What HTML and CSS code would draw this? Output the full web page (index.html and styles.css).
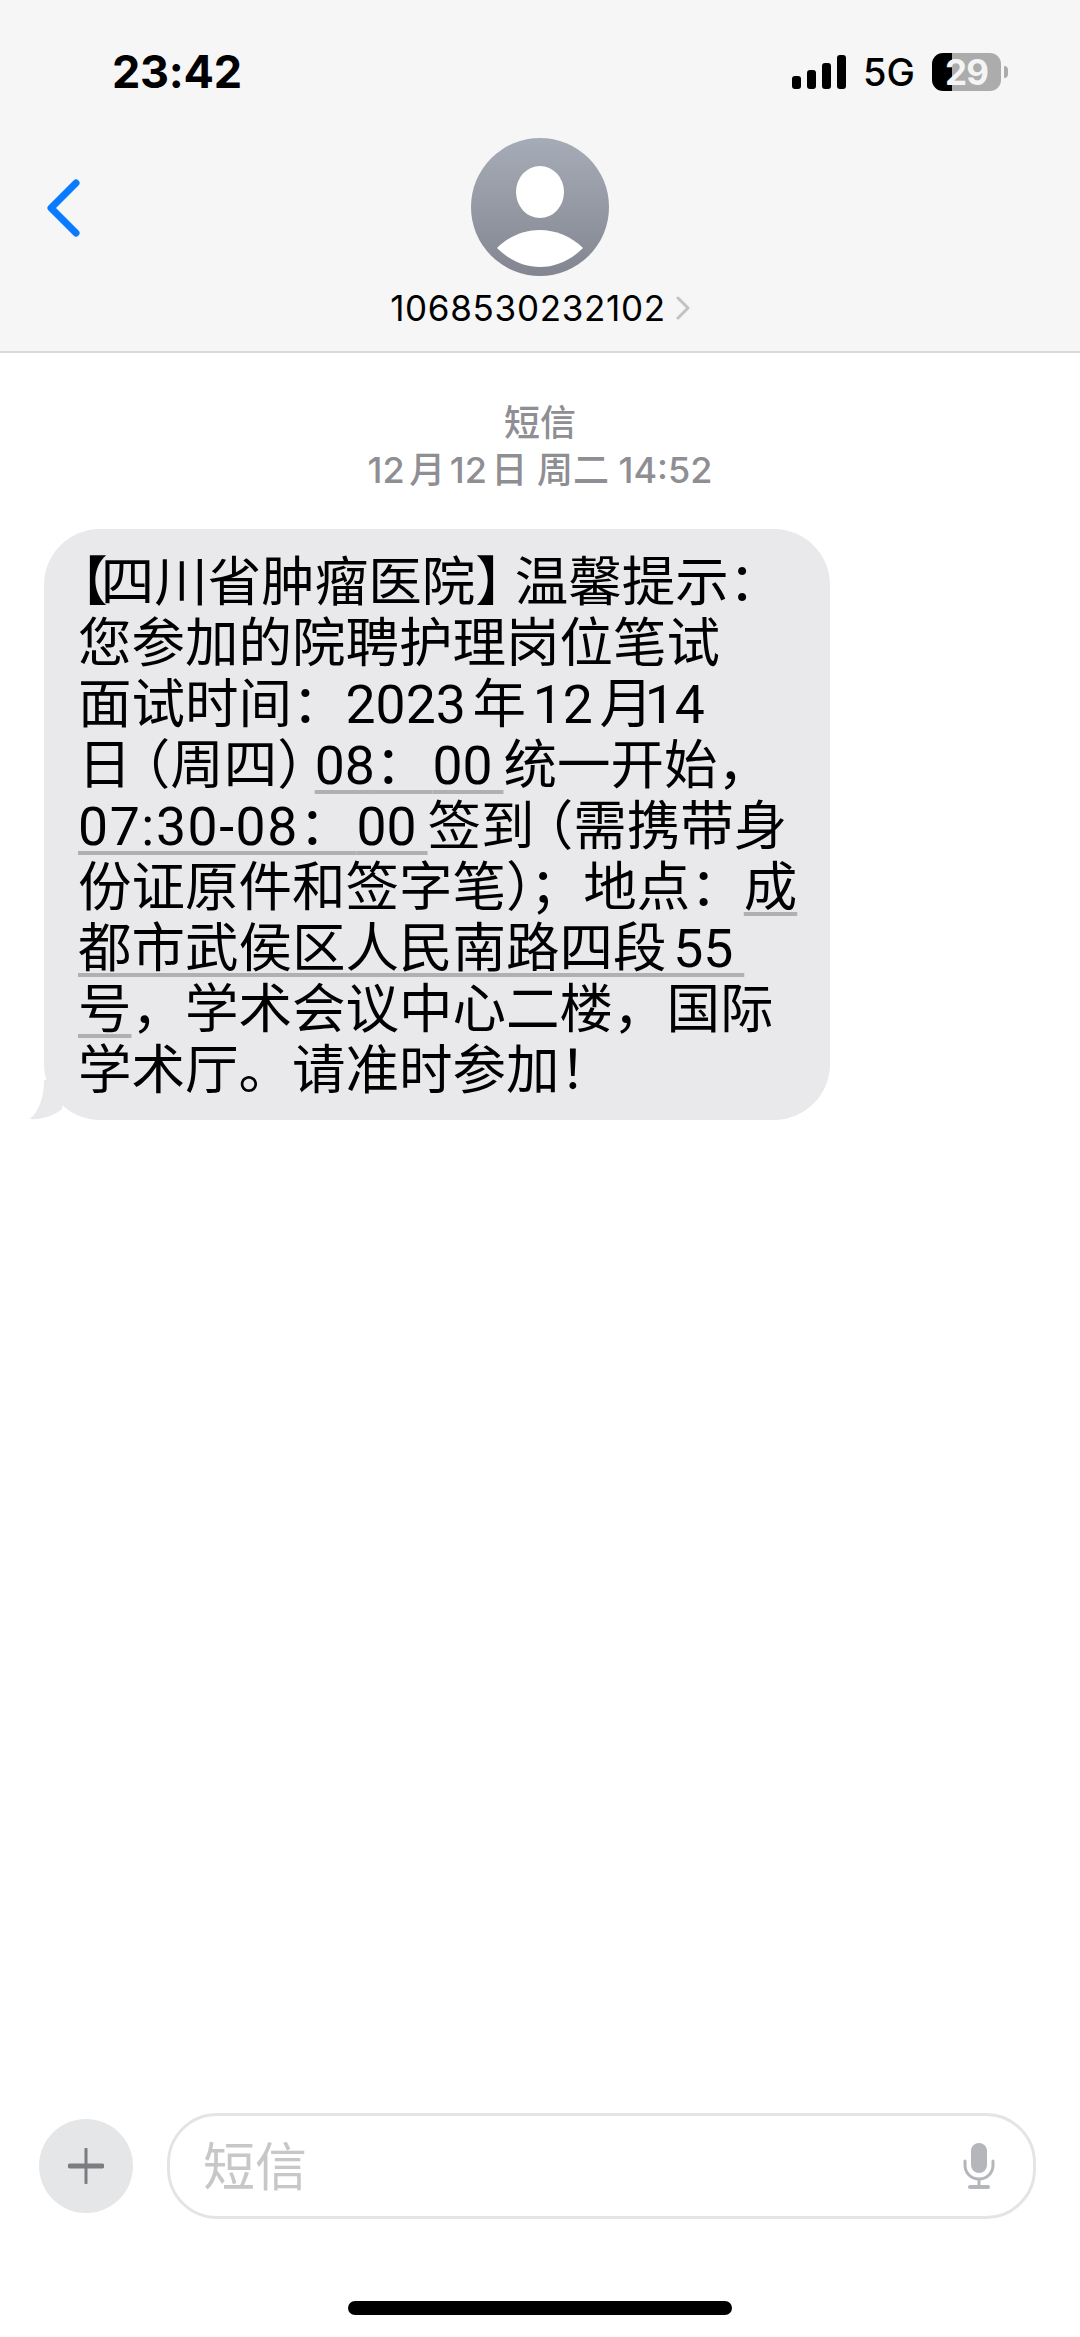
FILE: index.html
```html
<!DOCTYPE html>
<html lang="zh-CN">
<head>
  <meta charset="UTF-8" />
  <meta name="viewport" content="width=device-width, initial-scale=1" />
  <title>短信</title>
  <link rel="stylesheet" href="styles.css">
</head>
<body>
  <header class="top">
    <div class="status-bar">
      <span class="time">23:42</span>
      <div class="status-icons">
        <div class="signal">
          <i class="bar1"></i><i class="bar2"></i><i class="bar3"></i><i class="bar4"></i>
        </div>
        <span class="network">5G</span>
        <div class="battery"><span>29</span></div>
        <div class="battery-tip"></div>
      </div>
    </div>

    <div class="contact">
      <button class="back" aria-label="返回">
        <svg width="33" height="58" viewBox="0 0 33 58"><path d="M29 4 L4 29 L29 54" fill="none" stroke="#0a7aff" stroke-width="7" stroke-linecap="round" stroke-linejoin="round"/></svg>
      </button>
      <svg class="avatar" width="138" height="138" viewBox="0 0 138 138">
        <defs>
          <linearGradient id="avatarFill" x1="0" y1="0" x2="0" y2="1">
            <stop offset="0" stop-color="#a6acb7"/>
            <stop offset="1" stop-color="#838690"/>
          </linearGradient>
        </defs>
        <circle cx="69" cy="69" r="69" fill="url(#avatarFill)"/>
        <ellipse cx="69" cy="54" rx="24" ry="26" fill="#fff"/>
        <path d="M26 110 C38 98 54 92 69 92 C84 92 100 98 112 110 C100 122 85 129 69 129 C53 129 38 122 26 110 Z" fill="#fff"/>
      </svg>
      <div class="name">
        <span>1068530232102</span>
        <svg width="14" height="24" viewBox="0 0 14 24"><path d="M2 2 L12 12 L2 22" fill="none" stroke="#c2c2c4" stroke-width="3" stroke-linecap="round" stroke-linejoin="round"/></svg>
      </div>
    </div>
  </header>

  <main class="thread">
    <div class="stamp">
      <div class="stamp-kind">短信</div>
      <div>12月12日 周二 14:52</div>
    </div>

    <div class="bubble">
      <p>
        <span class="bracket-open">【</span>四川省肿瘤医院<span class="bracket-close">】</span>温馨提示：<br>
        您参加的院聘护理岗位笔试<br>
        面试时间：2023年12<span class="month">月</span>14<br>
        日<span class="paren-open">（</span>周四<span class="paren-close">）</span><span class="link">08<span class="colon">：</span>00&#8202;&#8202;</span>统一开始，<br>
        <span class="link"><span class="clock">07:30-08</span><span class="colon">：</span>00&#8202;&#8202;</span>签到<span class="paren-open">（</span>需携带身<br>
        份证原件和签字笔<span class="paren-soft">）</span>；地点：<span class="link">成<br>都市武侯区人民南路四段55&#8202;&#8202;<br>号</span>，学术会议中心二楼，国际<br>
        学术厅。请准时参加！
      </p>
      <svg class="tail" width="36" height="40" viewBox="0 0 36 40"><path d="M14 0 C14 16 10 30 0 39 C10 40 24 36 32 29 L36 0 Z" fill="#e9e9eb"/></svg>
    </div>
  </main>

  <footer class="composer">
    <button class="plus" aria-label="添加">
      <svg width="36" height="36" viewBox="0 0 36 36"><path d="M18 1 V35" stroke="#7c7d80" stroke-width="3" stroke-linecap="round"/><path d="M2 18 H34" stroke="#7c7d80" stroke-width="5" stroke-linecap="round"/></svg>
    </button>
    <div class="input">
      <span class="placeholder">短信</span>
      <svg width="32" height="46" viewBox="0 0 32 46">
        <rect x="8" y="0" width="16" height="30" rx="8" fill="#b5b6bb"/>
        <path d="M2 18 V22 C2 30 8 36 16 36 C24 36 30 30 30 22 V18" fill="none" stroke="#b5b6bb" stroke-width="3" stroke-linecap="round"/>
        <path d="M16 36 V43" stroke="#b5b6bb" stroke-width="3"/>
        <path d="M7 44 H25" stroke="#b5b6bb" stroke-width="4" stroke-linecap="round"/>
      </svg>
    </div>
  </footer>

  <div class="home-row"><div class="home-bar"></div></div>
</body>
</html>
```

FILE: styles.css
```css
html, body {
  margin: 0;
  padding: 0;
}

body {
  width: 1080px;
  height: 2337px;
  overflow: hidden;
  display: flex;
  flex-direction: column;
  background: #fff;
  color: #000;
  font-family: Inter, "Noto Sans CJK SC", sans-serif;
  text-autospace: normal;
}

button {
  border: none;
  background: none;
  padding: 0;
}

.top {
  height: 353px;
  box-sizing: border-box;
  background: #f6f6f6;
  border-bottom: 2px solid #d9d9d9;
}

.status-bar {
  height: 138px;
  box-sizing: border-box;
  padding: 48px 72px 0 112px;
  display: flex;
  justify-content: space-between;
  align-items: flex-start;
}

.time {
  font-size: 45px;
  font-weight: 700;
  line-height: 48px;
  letter-spacing: -0.3px;
}

.status-icons {
  display: flex;
  align-items: center;
  height: 48px;
}

.signal {
  display: flex;
  align-items: flex-end;
  gap: 6px;
  height: 34px;
  margin-right: 17px;
}

.signal i {
  display: block;
  width: 9px;
  background: #000;
  border-radius: 3px;
}

.bar1 { height: 13px; }
.bar2 { height: 19px; }
.bar3 { height: 26px; }
.bar4 { height: 34px; }

.network {
  font-size: 38px;
  font-weight: 500;
  line-height: 48px;
  margin-right: 17px;
}

.battery {
  width: 69px;
  height: 38px;
  border-radius: 11px;
  background: linear-gradient(to right, #000 20px, #acacac 20px);
  display: flex;
  align-items: center;
  justify-content: center;
  color: #f4f4f4;
  font-size: 35px;
  font-weight: 700;
  letter-spacing: -1px;
}

.battery-tip {
  width: 4px;
  height: 12px;
  margin-left: 3px;
  background: #acacac;
  border-radius: 0 6px 6px 0;
}

.contact {
  position: relative;
  display: flex;
  flex-direction: column;
  align-items: center;
}

.back {
  position: absolute;
  left: 47px;
  top: 41px;
  display: flex;
}

.name {
  display: flex;
  align-items: center;
  gap: 10px;
  margin-top: 10px;
  font-size: 35px;
  line-height: 44px;
  letter-spacing: 0.7px;
}

.thread {
  flex: 1;
  padding-top: 47px;
}

.stamp {
  text-align: center;
  color: #8e8e93;
  font-size: 36px;
  font-weight: 500;
  line-height: 47px;
}

.bubble {
  position: relative;
  width: 786px;
  box-sizing: border-box;
  margin: 35px 0 0 44px;
  padding: 23px 20px 19px 34px;
  background: #e9e9eb;
  border-radius: 56px;
}

.bubble p {
  margin: 0;
  font-family: Roboto, "Noto Sans CJK SC", sans-serif;
  font-size: 53.5px;
  line-height: 61px;
  white-space: nowrap;
  text-spacing-trim: trim-start;
}

.bracket-open {
  margin-left: 3px;
  letter-spacing: -7px;
}

.bracket-close {
  letter-spacing: -14px;
}

.paren-open {
  font-feature-settings: "halt";
  margin-left: 12px;
}

.paren-close {
  letter-spacing: -16px;
}

.paren-soft {
  letter-spacing: -3px;
}

.month {
  letter-spacing: -15px;
}

.clock {
  letter-spacing: 1.6px;
}

.colon {
  letter-spacing: 4px;
}

.link {
  text-decoration: underline;
  text-decoration-color: #b0b0b2;
  text-decoration-thickness: 4px;
  text-underline-offset: 6px;
  text-decoration-skip-ink: none;
}

.tail {
  position: absolute;
  left: -14px;
  bottom: 0;
}

.composer {
  display: flex;
  align-items: center;
  gap: 34px;
  padding: 0 44px 0 39px;
}

.plus {
  width: 94px;
  height: 94px;
  border-radius: 50%;
  background: #e5e6e8;
  display: flex;
  align-items: center;
  justify-content: center;
  flex: none;
}

.input {
  flex: 1;
  height: 106px;
  box-sizing: border-box;
  border: 3px solid #e4e4e4;
  border-radius: 50px;
  display: flex;
  align-items: center;
  justify-content: space-between;
  padding: 0 38px 0 33px;
}

.placeholder {
  font-family: "Noto Sans CJK SC", sans-serif;
  font-size: 52px;
  color: #c7c7c9;
  padding-bottom: 6px;
}

.home-row {
  height: 118px;
  display: flex;
  justify-content: center;
  padding-top: 82px;
  box-sizing: border-box;
}

.home-bar {
  width: 384px;
  height: 14px;
  border-radius: 7px;
  background: #000;
}
```
